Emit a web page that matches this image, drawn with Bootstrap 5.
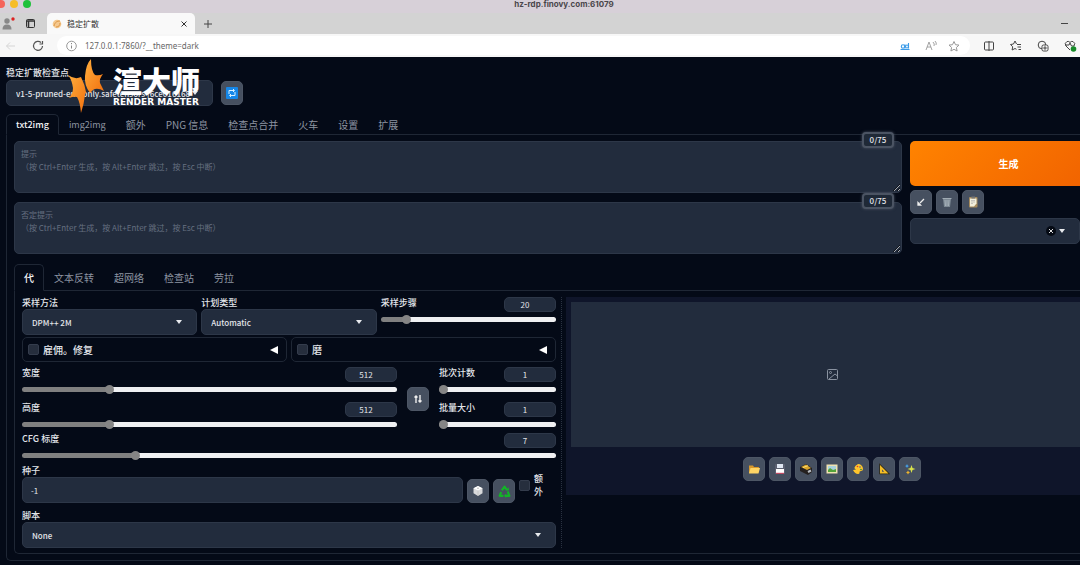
<!DOCTYPE html>
<html lang="zh-CN" data-bs-theme="dark">
<head>
<meta charset="utf-8">
<meta name="viewport" content="width=device-width, initial-scale=1">
<title>稳定扩散</title>
<link rel="stylesheet" href="https://cdn.jsdelivr.net/npm/bootstrap@5.3.0/dist/css/bootstrap.min.css">
<style>
  :root { --ink:#e2e5ea; --panel:#222c3d; --line:#1f2735; --page:#040a17; }
  body { font:9px/13px "Noto Sans CJK SC",sans-serif; background:var(--page); color:var(--ink); overflow:hidden; }
  svg { display:block; flex:none; }

  /* browser frame */
  .mac-bar { height:13px; background:#d7d0d8; color:#4a464b; font:bold 8px/9px Inter,sans-serif; }
  .light { width:8px; height:8px; border-radius:50%; margin-right:5px; }
  .strip { height:21px; background:#d3d3d3; color:#333; }
  .page-tab { width:148px; height:21px; background:#f9f9f9; border-radius:5px 5px 0 0; color:#333; font-size:8px; }
  .bare { background:none; border:0; padding:0; color:inherit; }
  .toolbar { height:23px; background:#f7f7f7; color:#555; }
  .address { height:19px; background:#fff; border-radius:10px; padding-right:8px; }
  .address input { font:8px/13px "Noto Sans",sans-serif; color:#666; background:none; border:0; padding:0; outline:0; }

  /* shared controls */
  .cap { font-size:9px; line-height:12px; height:12px; font-weight:500; color:var(--ink); white-space:nowrap; display:block; }
  .form-select, [data-bs-theme=dark] .form-select {
    height:26px; padding:0 22px 0 9px; font-size:8px; line-height:13px; font-weight:500; color:var(--ink); background-color:var(--panel); border:1px solid #2d3748; border-radius:5px;
    background-image:url("data:image/svg+xml,%3csvg xmlns='http://www.w3.org/2000/svg' viewBox='0 0 6 4'%3e%3cpath fill='%23e8eaee' d='M0 0h6L3 4z'/%3e%3c/svg%3e");
    background-size:6px 4px; background-position:right 14px center; }
  .tool { width:22px; height:24px; padding:0; border:1px solid #4d5665; border-radius:5px; background:#465060; display:flex; align-items:center; justify-content:center; flex:none; }
  .field { background:var(--panel); border:1px solid #2d3748; border-radius:5px; color:var(--ink); font-size:8px; line-height:13px; }
  .num { width:52px; height:15px; padding:0 10px 0 0; text-align:center; }
  .head { height:15px; display:flex; justify-content:space-between; align-items:flex-start; }
  input[type=range] { -webkit-appearance:none; appearance:none; display:block; width:100%; height:14px; margin:0; background:none; }
  input[type=range]::-webkit-slider-runnable-track { height:5px; border-radius:3px; background:linear-gradient(90deg,#808080 var(--fill),#eff0f2 var(--fill)); }
  input[type=range]::-webkit-slider-thumb { -webkit-appearance:none; width:9px; height:9px; margin-top:-2px; border-radius:50%; background:#858585; }
  .tick { -webkit-appearance:none; appearance:none; width:11px; height:11px; margin:0; border:1px solid #343c4c; border-radius:2px; background:#262e3d; flex:none; }

  .nav-tabs { border:0; margin-bottom:-1px; position:relative; }
  .nav-tabs .nav-link { padding:0 9px; font-size:10px; line-height:15px; color:#8d94a1; border:1px solid transparent; border-radius:5px 5px 0 0; margin:0; }
  .nav-tabs .nav-link.active { color:#f4f5f7; background:var(--page); border-color:var(--line) var(--line) var(--page); font-weight:500; }
  .nav-tabs .nav-link.latin { font-size:9px; }
  .main-tabs .nav-link { height:21px; }
  .sub-tabs { margin-top:10px; }
  .sub-tabs .nav-link { height:27px; }

  /* application */
  .app { padding:10px 0 0 6px; }
  .model-row { margin:1px 0 8px; }
  .model { width:207px; }
  .sheet { border:1px solid var(--line); border-right:0; padding:6px 0 6px 7px; border-radius:0 0 0 5px; }
  .top-grid { display:grid; grid-template-columns:888fr 170fr; column-gap:8px; }
  .prompts { display:grid; row-gap:9px; }
  .prompt { display:block; width:100%; height:52px; padding:5px 6px; resize:vertical; }
  .prompt::placeholder { color:#667081; opacity:1; }
  .count { position:absolute; right:8px; top:-9px; width:32px; height:16px; font-size:8px; line-height:12px; font-weight:500; text-align:center; color:#e5e7eb; background:#1f2937; border:2px solid #4b5463; border-radius:4px; box-shadow:0 0 3px #4b5463; }
  .go { height:45px; margin-right:-27px; border:0; border-radius:5px; color:#fff; font-size:10px; font-weight:700; background:linear-gradient(135deg,#ff8300,#f06000); }
  .work { border:1px solid var(--line); border-right:0; border-radius:0 0 0 5px; padding:6px 0 5px 7px; display:grid; grid-template-columns:540fr 518fr; }
  .settings { border-right:1px dotted #2a3241; padding-right:5px; }
  .three { display:grid; grid-template-columns:1fr 1fr 1fr; gap:4px; }
  .folds { display:grid; grid-template-columns:1fr 1fr; gap:4px; margin-top:2px; }
  .fold { height:25px; border:1px solid var(--line); border-radius:5px; padding:0 8px 0 5px; font-size:10px; font-weight:500; }
  .sizes { display:grid; grid-template-columns:1fr 22px 117px; column-gap:10px; margin:5px 0 2px; }
  .pair { display:grid; row-gap:6px; }
  .seed-row { margin:3px 0 7px; }
  .seed-input { display:block; width:100%; height:26px; }
  .seed-extra { width:10px; line-height:13px; margin:0 12px 0 4px; font-weight:500; }
  .extra-box { padding-bottom:5px; }
  .result { background:#0f152a; margin:0 -18px 0 4px; padding:5px 5px 14px; }
  .gallery { height:145px; background:var(--panel); margin-bottom:10px; }

  .brand { position:absolute; left:68px; top:2px; }
  .brand-cn { font-size:29px; line-height:34px; font-weight:900; color:#fff; }
  .brand-en { font:bold 9px/10px "DejaVu Sans",sans-serif; color:#fff; }
</style>
</head>
<body>
<header>
  <div class="mac-bar position-relative text-center">
    <div class="position-absolute top-0 start-0 d-flex">
      <span class="light" style="background:#f5635b;margin-left:-3px"></span><span class="light" style="background:#f6bd27"></span><span class="light" style="background:#1fc13b"></span>
    </div>
    <span class="ps-5">hz-rdp.finovy.com:61079</span>
  </div>
  <div class="strip d-flex align-items-center">
    <svg width="47" height="21" viewBox="0 0 47 21"><circle cx="7" cy="8" r="2.7" fill="#888"/><path d="M2.500 16.500q0-5 4.500-5t4.500 5z" fill="#888"/><circle cx="13" cy="6" r="1.700" fill="#d22"/><rect x="26.500" y="6.500" width="8" height="8" rx="1" fill="none" stroke="#333"/><path d="M26.500 8h8M28.500 8v6" stroke="#333" stroke-width="1.500"/></svg>
    <div class="page-tab d-flex align-items-center ps-1 pe-2">
      <svg width="12" height="12" viewBox="0 0 12 12" class="me-1"><circle cx="6" cy="6" r="4.300" fill="#f5c98f"/><path d="M3 8c1-4 3-5 6-5M5 9c3 0 4-2 4-4" fill="none" stroke="#dd9646"/></svg>
      <span>稳定扩散</span>
      <button class="bare ms-auto" aria-label="关闭标签页"><svg width="6" height="6" viewBox="0 0 6 6"><path d="M.5.5l5 5m0-5l-5 5" stroke="#333"/></svg></button>
    </div>
    <button class="bare ms-2" aria-label="新建标签页"><svg width="10" height="10" viewBox="0 0 10 10"><path d="M5 1v8M1 5h8" stroke="#444"/></svg></button>
    <button class="bare ms-auto me-2 pe-1" aria-label="最小化"><svg width="7" height="7" viewBox="0 0 7 7"><path d="M0 3.500h7" stroke="#444"/></svg></button>
  </div>
  <div class="toolbar d-flex align-items-center">
    <svg width="57" height="20" viewBox="0 0 57 20"><path d="M15 10H6.500m3.500-3.500L6.500 10l3.500 3.500" fill="none" stroke="#d5d5d5"/><path d="M41 6.500A4.500 4.500 0 1 0 42.500 10M42.500 5v3h-3" fill="none" stroke="#555" stroke-width="1.200"/></svg>
    <div class="address d-flex align-items-center flex-grow-1">
      <svg width="28" height="18" viewBox="0 0 28 18"><circle cx="14.500" cy="9" r="4.800" fill="none" stroke="#999"/><path d="M14.500 8.500v3M14.500 6v1.200" stroke="#888"/></svg>
      <input class="flex-grow-1" aria-label="地址" value="127.0.0.1:7860/?__theme=dark">
      <svg width="64" height="14" viewBox="0 0 64 14"><g fill="none" stroke="#3b9be8" stroke-width="1.100"><circle cx="5" cy="7.500" r="1.700"/><path d="M7 5.500v4M10.500 4v5.500M2.500 10.500h9"/><circle cx="9" cy="7.500" r="1.500"/></g><path d="M28 11l3-8 3 8m-5-3h4M35 3q2 2 1 4m1-5q2 2 1 4" fill="none" stroke="#999" stroke-width=".9"/><path d="M56 2.500l1.500 3.200 3.500.4-2.600 2.400.7 3.500-3.100-1.700-3.100 1.700.7-3.500L51 6.100l3.500-.4z" fill="none" stroke="#999"/></svg>
    </div>
    <svg width="110" height="18" viewBox="0 0 110 18"><g fill="none" stroke="#444"><rect x="14.500" y="5" width="9" height="8" rx="1"/><path d="M19 4v10"/><path d="M46.500 7l-1.500-3-1.500 3-3 .5 2.200 2.300-.6 3.200 2.900-1.500 1.500.8M47 7.500h4M47.500 10h3.500M48.500 12.500H51"/><circle cx="72" cy="8" r="3.800"/><rect x="72" y="8" width="6" height="6" rx="1.500" fill="#f7f7f7"/><path d="M75 9.200v3.600m-1.800-1.800h3.600"/><path d="M100 13l-4-4q-2-3 1-4.500 2-.5 3 1 1-1.500 3-1 3 1.500 1 4.500M95 8h4l1-2 1.500 3H104"/></g><circle cx="103.500" cy="12" r="2.800" fill="#168a28"/></svg>
  </div>
</header>

<main class="app position-relative">
  <label class="cap" for="ckpt">稳定扩散检查点</label>
  <div class="model-row d-flex align-items-center">
    <select id="ckpt" class="form-select model"><option>v1-5-pruned-emaonly.safetensors [6ce0161689]</option></select>
    <button class="tool ms-2" aria-label="刷新"><svg width="12" height="12" viewBox="0 0 12 12"><rect width="12" height="12" rx="1" fill="#1687e8"/><path d="M3 7V3.500h5m1 1.500v3.500H4M7 2l1.500 1.500L7 5M5 7L3.500 8.500 5 10" fill="none" stroke="#d9f0ff"/></svg></button>
  </div>
  <div class="brand d-flex">
    <svg width="37" height="54" viewBox="0 0 37 54"><defs><linearGradient id="fl" x1="0" y1="0" x2="1" y2="1"><stop stop-color="#ffae3d"/><stop offset="1" stop-color="#f2700e"/></linearGradient></defs><path fill="url(#fl)" d="M23 0q0 12 4 16 4 1 8-1-4 5-3 9l4 8q-7-4-11-1l-3 3q-6-8-5-17Q18 5 23 0z"/><path fill="url(#fl)" d="M0 16q7 5 13 2 4 8 5 15l-1 3q-1 9-4 18-1-11-4-16-3-1-8 1 4-5 4-10Q4 21 0 16z"/></svg>
    <div class="ps-2 pt-1"><div class="brand-cn">渲大师</div><div class="brand-en">RENDER MASTER</div></div>
  </div>

  <nav class="nav nav-tabs main-tabs">
    <button class="nav-link latin active">txt2img</button><button class="nav-link latin">img2img</button><button class="nav-link">额外</button><button class="nav-link">PNG 信息</button><button class="nav-link">检查点合并</button><button class="nav-link">火车</button><button class="nav-link">设置</button><button class="nav-link">扩展</button>
  </nav>

  <section class="sheet">
    <div class="top-grid">
      <div class="prompts">
        <div class="position-relative">
          <textarea class="field prompt" aria-label="提示" placeholder="提示&#10;（按 Ctrl+Enter 生成，按 Alt+Enter 跳过，按 Esc 中断）"></textarea>
          <span class="count">0/75</span>
        </div>
        <div class="position-relative">
          <textarea class="field prompt" aria-label="否定提示" placeholder="否定提示&#10;（按 Ctrl+Enter 生成，按 Alt+Enter 跳过，按 Esc 中断）"></textarea>
          <span class="count">0/75</span>
        </div>
      </div>
      <div class="d-flex flex-column gap-1">
        <button class="go">生成</button>
        <div class="d-flex gap-1">
          <button class="tool" aria-label="读取参数"><svg width="12" height="12" viewBox="0 0 12 12"><path d="M9 3L5 7M3 9V6.500L5.500 9z" stroke="#eee" stroke-width="1.300" fill="#eee"/></svg></button>
          <button class="tool" aria-label="清空"><svg width="12" height="12" viewBox="0 0 12 12"><path d="M2 3h8l-1 8H3z" fill="#7d8994"/><path d="M1.500 2.500h9M4 4l.5 6M6 4v6M8 4l-.5 6" stroke="#aab5bd" stroke-width=".9"/></svg></button>
          <button class="tool" aria-label="粘贴样式"><svg width="12" height="12" viewBox="0 0 12 12"><rect x="2" y="1" width="8.500" height="10.500" rx="1" fill="#a58a5c"/><path d="M3 2.500h6.500v5L7 10.500H3z" fill="#f4f0dc"/><path d="M4 4.500h4M4 6h4M4 7.500h2" stroke="#aaa" stroke-width=".6"/><rect x="4.500" y=".5" width="3.500" height="2" fill="#777"/></svg></button>
        </div>
        <div class="position-relative">
          <select class="form-select" aria-label="样式"><option></option></select>
          <button class="bare position-absolute top-50 translate-middle-y end-0 me-4" aria-label="清除"><svg width="10" height="10" viewBox="0 0 10 10"><circle cx="5" cy="5" r="5" fill="#050a14"/><path d="M3 3l4 4m0-4L3 7" stroke="#ddd"/></svg></button>
        </div>
      </div>
    </div>

    <nav class="nav nav-tabs sub-tabs">
      <button class="nav-link active">代</button><button class="nav-link">文本反转</button><button class="nav-link">超网络</button><button class="nav-link">检查站</button><button class="nav-link">劳拉</button>
    </nav>

    <div class="work">
      <div class="settings">
        <div class="three">
          <div><label class="cap" for="sampler">采样方法</label><select id="sampler" class="form-select"><option>DPM++ 2M</option></select></div>
          <div><label class="cap" for="sched">计划类型</label><select id="sched" class="form-select"><option>Automatic</option></select></div>
          <div><div class="head"><label class="cap" for="steps">采样步骤</label><input class="field num" aria-label="采样步骤数值" value="20"></div><input id="steps" type="range" min="1" max="150" value="20" style="--fill:15%"></div>
        </div>
        <div class="folds">
          <div class="fold d-flex align-items-center"><input id="fix" class="tick" type="checkbox"><label for="fix" class="ms-1">雇佣。修复</label><svg class="ms-auto" width="8" height="8" viewBox="0 0 8 8"><path d="M0 4l8-4v8z" fill="#fff"/></svg></div>
          <div class="fold d-flex align-items-center"><input id="refine" class="tick" type="checkbox"><label for="refine" class="ms-1">磨</label><svg class="ms-auto" width="8" height="8" viewBox="0 0 8 8"><path d="M0 4l8-4v8z" fill="#fff"/></svg></div>
        </div>
        <div class="sizes">
          <div class="pair">
            <div><div class="head"><label class="cap" for="w">宽度</label><input class="field num" aria-label="宽度数值" value="512"></div><input id="w" type="range" min="64" max="2048" value="512" style="--fill:23%"></div>
            <div><div class="head"><label class="cap" for="h">高度</label><input class="field num" aria-label="高度数值" value="512"></div><input id="h" type="range" min="64" max="2048" value="512" style="--fill:23%"></div>
          </div>
          <button class="tool align-self-center" aria-label="交换宽高"><svg width="10" height="10" viewBox="0 0 10 10"><path d="M3 9V2M1.500 3.500L3 2l1.500 1.500M7 1v7M5.500 6.500L7 8l1.500-1.500" fill="none" stroke="#eee" stroke-width="1.400"/></svg></button>
          <div class="pair">
            <div><div class="head"><label class="cap" for="bc">批次计数</label><input class="field num" aria-label="批次计数数值" value="1"></div><input id="bc" type="range" min="1" max="100" value="1" style="--fill:4%"></div>
            <div><div class="head"><label class="cap" for="bs">批量大小</label><input class="field num" aria-label="批量大小数值" value="1"></div><input id="bs" type="range" min="1" max="8" value="1" style="--fill:4%"></div>
          </div>
        </div>
        <div><div class="head"><label class="cap" for="cfg">CFG 标度</label><input class="field num" aria-label="CFG 标度数值" value="7"></div><input id="cfg" type="range" min="1" max="30" value="7" style="--fill:21%"></div>
        <div class="seed-row d-flex gap-1 align-items-end">
          <div class="flex-grow-1"><label class="cap" for="seed">种子</label><input id="seed" class="field seed-input px-2" value="-1"></div>
          <button class="tool" aria-label="随机种子"><svg width="12" height="12" viewBox="0 0 12 12"><path d="M6 1l4.500 2.300v5L6 11 1.500 8.300v-5z" fill="#d9dadb"/><path d="M6 1l4.500 2.300L6 5.500 1.500 3.300z" fill="#fff"/><path d="M6 5.500V11" stroke="#bbb" stroke-width=".6"/><circle cx="6" cy="3.200" r=".6" fill="#888"/></svg></button>
          <button class="tool" aria-label="复用种子"><svg width="13" height="13" viewBox="0 0 12 12"><path d="M3.500 5L6 1.500 8.200 4.500M9 6l1.500 4H6.500M5 10H1.500L3 6.500" fill="none" stroke="#12b527" stroke-width="2" stroke-linejoin="round"/><path d="M7 5h3V2zM7.500 8v4L5.500 10z" fill="#12b527"/></svg></button>
          <div class="extra-box d-flex"><input id="extra" class="tick mt-2" type="checkbox"><label for="extra" class="seed-extra">额外</label></div>
        </div>
        <label class="cap" for="script">脚本</label>
        <select id="script" class="form-select"><option>None</option></select>
      </div>

      <div>
        <div class="result">
          <div class="gallery d-flex align-items-center justify-content-center"><svg width="11" height="11" viewBox="0 0 11 11"><g fill="none" stroke="#8a93a1"><rect x=".5" y=".5" width="10" height="10" rx="1"/><circle cx="3.500" cy="3.500" r="1"/><path d="M2 10l6-5 2.500 2"/></g></svg></div>
          <div class="d-flex justify-content-center gap-1">
            <button class="tool" aria-label="打开文件夹"><svg width="12" height="12" viewBox="0 0 12 12"><path d="M1 3V10h9l1-6H6L5 2.500H1z" fill="#d9992b"/><path d="M2.500 5H12l-1.500 5.500H1z" fill="#ffd565"/></svg></button>
            <button class="tool" aria-label="保存"><svg width="12" height="12" viewBox="0 0 12 12"><rect x="1" y="1" width="10" height="10" rx="1" fill="#5b6070"/><rect x="3" y="1" width="6" height="4" fill="#dfe7f2"/><rect x="2" y="6" width="8" height="4" fill="#fff"/><path d="M2 10.300h8" stroke="#d84460"/></svg></button>
            <button class="tool" aria-label="打包保存"><svg width="12" height="12" viewBox="0 0 12 12"><path d="M0 4l6-3 6 4v4l-4 3-8-4z" fill="#252120"/><path d="M1 4l5-2.500L11 5 7 7z" fill="#d9a42a"/><path d="M3 4.500L8 2.700" stroke="#ffe175"/><path d="M8 9l3-1.500" stroke="#b9bec4" stroke-width="2"/></svg></button>
            <button class="tool" aria-label="发送到 img2img"><svg width="12" height="12" viewBox="0 0 12 12"><rect x=".5" y="1.500" width="11" height="9" fill="#f0e2b0"/><rect x="2" y="3" width="8" height="6" fill="#a9d2dd"/><path d="M2 9V7l2-2 3 2 3-1v3z" fill="#54a33a"/></svg></button>
            <button class="tool" aria-label="发送到局部重绘"><svg width="12" height="12" viewBox="0 0 12 12"><path d="M6 1a5 5 0 0 1 5 5q0 2-2 2-2 0-1.500 2 0 1-1.500 1Q3 11 1 7L4 6.500Q0 5 6 1z" fill="#ffc52b"/><circle cx="5.500" cy="3.500" r=".8" fill="#d33"/><circle cx="8" cy="4" r=".8" fill="#36a"/><circle cx="9" cy="6.500" r=".8" fill="#383"/></svg></button>
            <button class="tool" aria-label="发送到附加功能"><svg width="12" height="12" viewBox="0 0 12 12"><path d="M2 2L10.500 10.500H2z" fill="none" stroke="#2c2610" stroke-width="1.500"/><path d="M2 2L10.500 10.500H2zM4 6.500v2.200h2.200z" fill="#f4bd26" fill-rule="evenodd"/></svg></button>
            <button class="tool" aria-label="高清放大"><svg width="12" height="12" viewBox="0 0 12 12"><path d="M7.500 2l1 3 3 1-3 1-1 3-1-3-3-1 3-1z" fill="#d9e34a"/><path d="M3 1l.7 1.500L5 3l-1.300.7L3 5l-.7-1.300L1 3l1.300-.5z" fill="#46a5ee"/><path d="M4 7.500l.7 1.300 1.300.7-1.300.7L4 11.500l-.7-1.300L2 9.500l1.300-.7z" fill="#efb42c"/></svg></button>
          </div>
        </div>
      </div>
    </div>
  </section>
</main>
<script src="https://cdn.jsdelivr.net/npm/bootstrap@5.3.0/dist/js/bootstrap.bundle.min.js"></script>
</body>
</html>
